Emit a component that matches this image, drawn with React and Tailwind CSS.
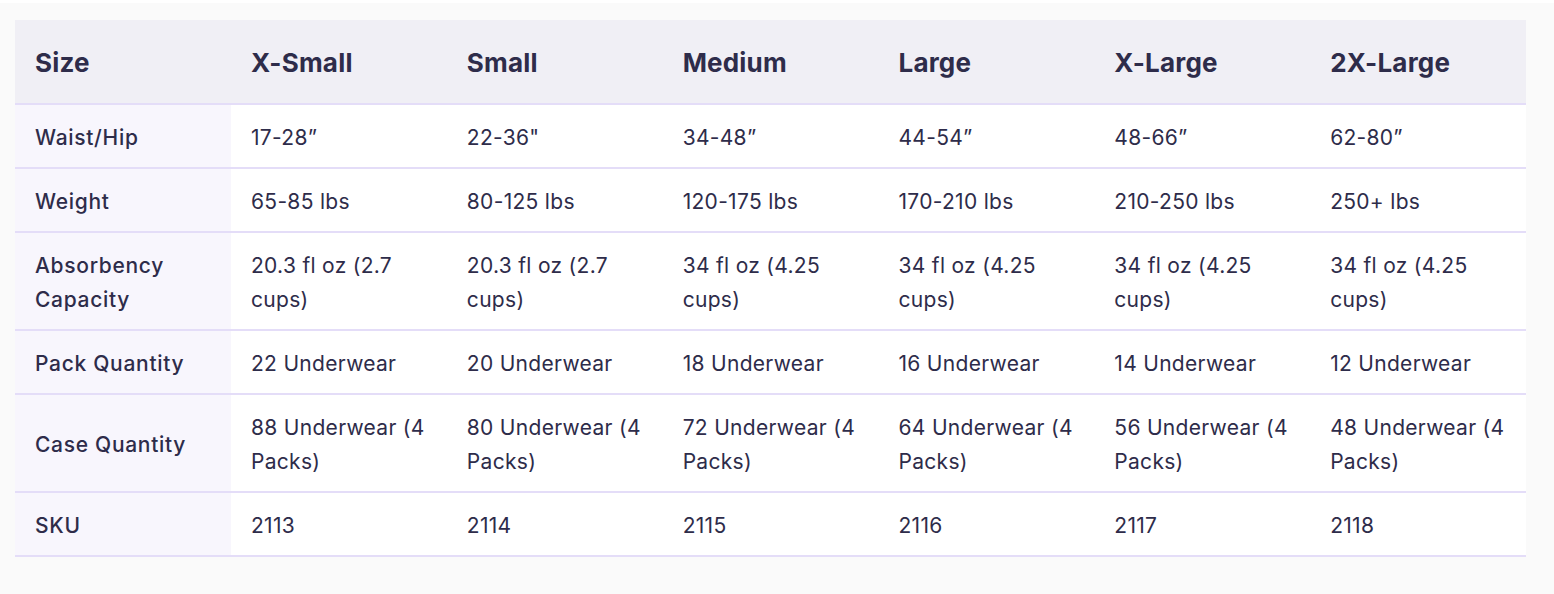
import React from 'react';

const sizes = ['X-Small', 'Small', 'Medium', 'Large', 'X-Large', '2X-Large'];

const rows = [
  { label: 'Waist/Hip', values: ['17-28\u201d', '22-36"', '34-48\u201d', '44-54\u201d', '48-66\u201d', '62-80\u201d'] },
  { label: 'Weight', values: ['65-85 lbs', '80-125 lbs', '120-175 lbs', '170-210 lbs', '210-250 lbs', '250+ lbs'] },
  {
    label: 'Absorbency Capacity',
    values: [
      '20.3 fl oz (2.7 cups)',
      '20.3 fl oz (2.7 cups)',
      '34 fl oz (4.25 cups)',
      '34 fl oz (4.25 cups)',
      '34 fl oz (4.25 cups)',
      '34 fl oz (4.25 cups)',
    ],
  },
  { label: 'Pack Quantity', values: ['22 Underwear', '20 Underwear', '18 Underwear', '16 Underwear', '14 Underwear', '12 Underwear'] },
  {
    label: 'Case Quantity',
    values: [
      '88 Underwear (4 Packs)',
      '80 Underwear (4 Packs)',
      '72 Underwear (4 Packs)',
      '64 Underwear (4 Packs)',
      '56 Underwear (4 Packs)',
      '48 Underwear (4 Packs)',
    ],
  },
  { label: 'SKU', values: ['2113', '2114', '2115', '2116', '2117', '2118'] },
];

export default function App() {
  return (
    <div
      className="h-[594px] w-full bg-[#fafafa] border-t-[3px] border-white text-[#2e2c4a]"
      style={{ fontFamily: 'Inter, "Liberation Sans", sans-serif' }}
    >
      <table className="ml-[15px] mt-[17px] w-[1511px] table-fixed border-collapse">
        <thead>
          <tr className="bg-[#f0eff5] border-b-2 border-[#e4ddf8]">
            <th className="w-[216px] pl-[20px] pt-[26px] pb-[23px] text-left text-[26px] leading-[34px] font-bold tracking-[0.2px]">
              Size
            </th>
            {sizes.map(s => (
              <th key={s} className="pl-[20px] pt-[26px] pb-[23px] text-left text-[26px] leading-[34px] font-bold tracking-[0.2px]">
                {s}
              </th>
            ))}
          </tr>
        </thead>
        <tbody>
          {rows.map(row => (
            <tr key={row.label} className="border-b-2 border-[#e4ddf8]">
              <td className="bg-[#f8f6fd] pl-[20px] pr-[30px] pt-[16px] pb-[12px] text-[21px] leading-[34px] font-medium tracking-[0.7px] align-middle">
                {row.label}
              </td>
              {row.values.map((v, i) => (
                <td key={i} className="bg-white pl-[20px] pr-[10px] pt-[16px] pb-[12px] text-[21px] leading-[34px] tracking-[0.3px] align-top">
                  {v}
                </td>
              ))}
            </tr>
          ))}
        </tbody>
      </table>
    </div>
  );
}
